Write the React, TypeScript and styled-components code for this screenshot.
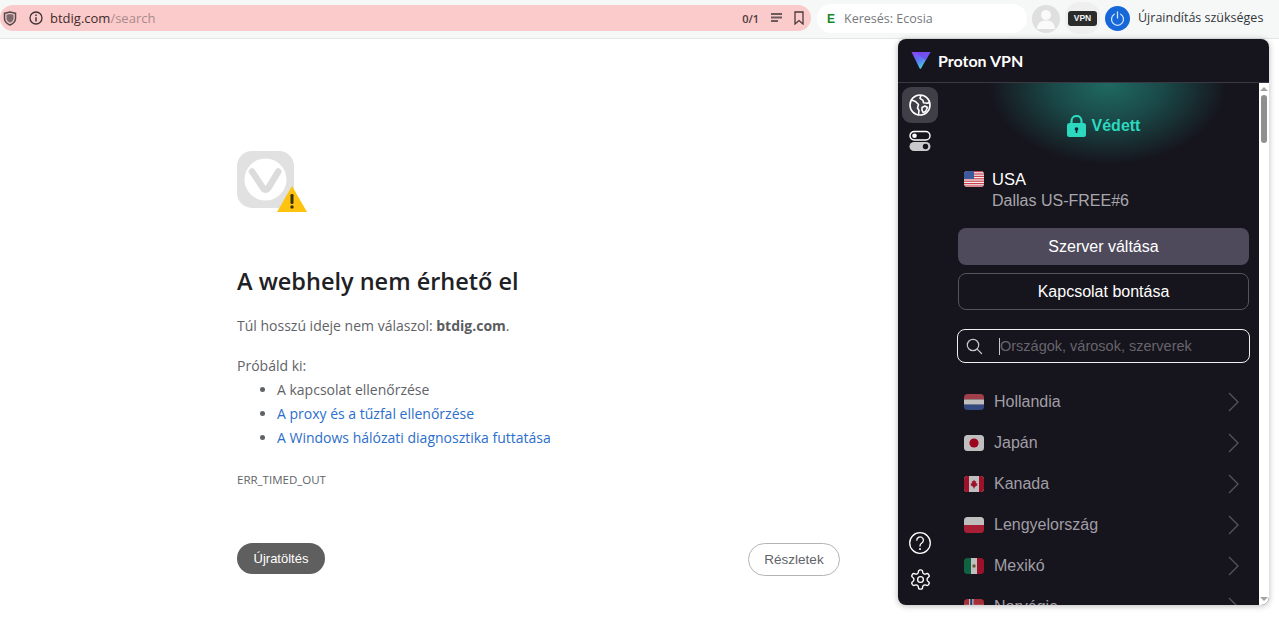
import React from "react";
import styled, { createGlobalStyle } from "styled-components";

const Global = createGlobalStyle`
  html, body { margin: 0; padding: 0; background: #fff; }
  * { box-sizing: border-box; }
`;

const Page = styled.div`
  position: relative;
  width: 1279px;
  height: 622px;
  overflow: hidden;
  background: #fff;
  font-family: "Open Sans", "Noto Sans", sans-serif;
`;

const Toolbar = styled.header`
  height: 39px;
  background: #f6f7f7;
  border-bottom: 1px solid #e6e6e6;
  display: flex;
  align-items: flex-start;
  padding-top: 5px;
`;

const AddressBar = styled.div`
  width: 811px;
  height: 26px;
  background: #fbcaca;
  border-radius: 13px;
  display: flex;
  align-items: center;
  padding: 0 7px 0 3px;
  font-size: 13px;
  color: #4a2c2e;
`;

const AddressIcon = styled.span<{ $mr: number }>`
  display: flex;
  margin-right: ${(p) => p.$mr}px;
`;

const Url = styled.span`
  flex: 1;
  color: #3f2a2c;
  font-size: 13px;
`;

const UrlPath = styled.span`
  color: #a98a8c;
`;

const Counter = styled.span`
  font-size: 11px;
  font-weight: 600;
  color: #4d3a3c;
  margin-right: 12px;
`;

const SearchField = styled.div`
  width: 210px;
  height: 29px;
  margin: -1px 0 0 6px;
  background: #fff;
  border-radius: 15px;
  display: flex;
  align-items: center;
  padding-left: 10px;
  font-size: 12.5px;
  color: #77797c;
  gap: 9px;
`;

const EcosiaBadge = styled.span`
  font-family: "Liberation Sans", sans-serif;
  font-weight: 700;
  font-size: 12px;
  color: #14892c;
`;

const Avatar = styled.div`
  width: 28px;
  height: 28px;
  margin: 0 0 0 5px;
  border-radius: 50%;
  background: #dfdfdf;
  display: flex;
  align-items: center;
  justify-content: center;
  overflow: hidden;
`;

const VpnSlot = styled.div`
  position: relative;
  width: 35px;
  height: 32px;
  margin: -3px 0 0 5px;
  background: #efefef;
  border-radius: 14px;
  display: flex;
  align-items: center;
  justify-content: center;
`;

const VpnBadge = styled.span`
  width: 29px;
  height: 15px;
  background: #2b2b2b;
  border-radius: 3px;
  color: #f2f2f2;
  font-family: "Liberation Sans", sans-serif;
  font-weight: 700;
  font-size: 8.5px;
  display: flex;
  align-items: center;
  justify-content: center;
`;

const PowerButton = styled.div`
  width: 25px;
  height: 25px;
  margin: 1px 0 0 5px;
  background: #1668d9;
  border-radius: 50%;
  display: flex;
  align-items: center;
  justify-content: center;
`;

const RestartLabel = styled.span`
  margin: 4px 0 0 8px;
  font-size: 12.5px;
  color: #33363a;
  white-space: nowrap;
`;

const ErrorPage = styled.main`
  width: 603px;
  margin-left: 237px;
  padding-top: 112px;
  color: #5f6368;
  font-size: 14px;
`;

const ErrorIcon = styled.svg`
  display: block;
  width: 71px;
  height: 62px;
`;

const Heading = styled.h1`
  margin: 52px 0 0;
  font-size: 23.5px;
  line-height: 32px;
  font-weight: 600;
  color: #202124;
`;

const Paragraph = styled.p`
  margin: 17px 0 0;
  line-height: 24px;
  font-size: 14px;
  strong { font-weight: 700; color: #5a5d61; }
`;

const TryLabel = styled.p`
  margin: 16px 0 0;
  line-height: 24px;
  font-size: 14px;
`;

const Suggestions = styled.ul`
  margin: 0;
  padding: 0 0 0 40px;
  list-style: disc;
`;

const Suggestion = styled.li<{ $link?: boolean }>`
  line-height: 24px;
  color: ${(p) => (p.$link ? "#2c6ecb" : "#5f6368")};
  &::marker { color: #5f6368; }
`;

const ErrorCode = styled.div`
  margin-top: 18px;
  font-size: 11.5px;
  line-height: 24px;
  color: #5f6368;
`;

const ActionRow = styled.div`
  margin-top: 51px;
  display: flex;
  justify-content: space-between;
  align-items: flex-start;
`;

const ReloadButton = styled.button`
  width: 88px;
  height: 31px;
  border: none;
  border-radius: 16px;
  background: #5f5f5f;
  color: #fff;
  font-family: "Liberation Sans", sans-serif;
  font-size: 13px;
  padding: 0;
`;

const DetailsButton = styled.button`
  width: 92px;
  height: 33px;
  border: 1px solid #b4b4b4;
  border-radius: 17px;
  background: #fff;
  color: #5f6368;
  font-family: "Liberation Sans", sans-serif;
  font-size: 13.5px;
  padding: 0;
`;

const Popup = styled.aside`
  position: absolute;
  left: 898px;
  top: 39px;
  width: 371px;
  height: 566px;
  border-radius: 8px;
  background: #16141c;
  box-shadow: 0 1px 6px rgba(0, 0, 0, 0.28);
  display: flex;
  flex-direction: column;
  overflow: hidden;
  font-family: "Liberation Sans", sans-serif;
`;

const PopupHeader = styled.div`
  height: 44px;
  flex: none;
  border-bottom: 1px solid #3a3841;
  display: flex;
  align-items: center;
  padding: 0 0 1px 13px;
  gap: 7px;
`;

const Brand = styled.span`
  font-family: Lato, "Noto Sans", sans-serif;
  font-weight: 700;
  font-size: 16px;
  color: #fff;
`;

const PopupBody = styled.div`
  flex: 1;
  min-height: 0;
  display: flex;
`;

const Sidebar = styled.nav`
  width: 45px;
  flex: none;
  padding: 4px 0 8px 4px;
  display: flex;
  flex-direction: column;
  align-items: flex-start;
`;

const NavItem = styled.div<{ $active?: boolean }>`
  width: 36px;
  height: 36px;
  border-radius: 9px;
  background: ${(p) => (p.$active ? "#403e47" : "transparent")};
  display: flex;
  align-items: center;
  justify-content: center;
`;

const SidebarSpacer = styled.div`
  flex: 1;
`;

const Main = styled.div`
  flex: 1;
  min-width: 0;
  overflow: hidden;
`;

const StatusGlow = styled.div`
  height: 85px;
  background: radial-gradient(ellipse 120px 82px at 165px 0, #1f6a62 0%, #1a4a49 45%, #16141c 100%);
  display: flex;
  align-items: center;
  justify-content: center;
  gap: 6px;
  padding: 0 0 0 5px;
  margin-bottom: 0;
  color: #2cd9bf;
  font-weight: 700;
  font-size: 16px;
`;

const Location = styled.div`
  margin: 0 0 0 21px;
  display: grid;
  grid-template-columns: 20px 1fr;
  column-gap: 8px;
  align-items: center;
`;

const Country = styled.div`
  font-size: 16.5px;
  line-height: 22px;
  color: #fff;
`;

const Server = styled.div`
  grid-column: 2;
  font-size: 16px;
  line-height: 22px;
  color: #a8a6ad;
`;

const PrimaryButton = styled.button`
  display: block;
  width: 291px;
  height: 37px;
  margin: 16px 0 0 15px;
  border: none;
  border-radius: 8px;
  background: #4e4a5b;
  color: #fff;
  font-family: inherit;
  font-size: 16px;
`;

const OutlineButton = styled.button`
  display: block;
  width: 291px;
  height: 37px;
  margin: 8px 0 0 15px;
  border: 1px solid #55535c;
  border-radius: 8px;
  background: transparent;
  color: #fff;
  font-family: inherit;
  font-size: 16px;
`;

const SearchBox = styled.div`
  width: 293px;
  height: 34px;
  margin: 19px 0 0 14px;
  border: 1.5px solid #f0f0f0;
  border-radius: 8px;
  display: flex;
  align-items: center;
  padding-left: 8px;
  gap: 16px;
  font-size: 14.5px;
  color: #66646c;
`;

const Placeholder = styled.span`
  border-left: 1px solid #c8c8c8;
  line-height: 17px;
  white-space: nowrap;
`;

const CountryList = styled.div`
  margin: 18px 0 0 15px;
  width: 291px;
`;

const CountryRow = styled.div`
  height: 41px;
  display: flex;
  align-items: center;
  padding-left: 6px;
  font-size: 16px;
  color: #a09ea6;
  gap: 10px;
`;

const CountryName = styled.span`
  flex: 1;
`;

const Chevron = styled.svg`
  margin-right: 10px;
`;

const Track = styled.div`
  position: relative;
  width: 10px;
  flex: none;
  background: #fff;
`;

const ArrowUp = styled.div`
  position: absolute;
  top: 4px;
  left: 1px;
  width: 0;
  height: 0;
  border: 4px solid transparent;
  border-top: 0;
  border-bottom: 4px solid #a3a3a3;
`;

const ArrowDown = styled.div`
  position: absolute;
  bottom: 4px;
  left: 1px;
  width: 0;
  height: 0;
  border: 4px solid transparent;
  border-bottom: 0;
  border-top: 4px solid #a3a3a3;
`;

const Thumb = styled.div`
  position: absolute;
  top: 12px;
  left: 2px;
  width: 6px;
  height: 48px;
  border-radius: 3px;
  background: #8f8f8f;
`;

type FlagKind = "us" | "nl" | "jp" | "ca" | "pl" | "mx" | "no";

const Flag = ({ kind, dim = true }: { kind: FlagKind; dim?: boolean }) => {
  const id = `clip-${kind}`;
  return (
    <svg width="20" height="16" viewBox="0 0 20 16" style={{ flex: "none", opacity: dim ? 0.78 : 1 }}>
      <clipPath id={id}>
        <rect width="20" height="16" rx="3.5" />
      </clipPath>
      <g clipPath={`url(#${id})`}>
        {kind === "us" && (
          <>
            <rect width="20" height="16" fill="#f3f0f0" />
            {[0, 2.4, 4.8, 7.2, 9.6, 12, 14.4].map((y) => (
              <rect key={y} y={y} width="20" height="1.2" fill="#c9404f" />
            ))}
            <rect width="10" height="8" fill="#3c5a9c" />
          </>
        )}
        {kind === "nl" && (
          <>
            <rect width="20" height="5.4" fill="#c94a57" />
            <rect y="5.4" width="20" height="5.3" fill="#efefef" />
            <rect y="10.7" width="20" height="5.3" fill="#3a5a9e" />
          </>
        )}
        {kind === "jp" && (
          <>
            <rect width="20" height="16" fill="#efefef" />
            <circle cx="10" cy="8" r="4.6" fill="#c4001f" />
          </>
        )}
        {kind === "ca" && (
          <>
            <rect width="20" height="16" fill="#efefef" />
            <rect width="5" height="16" fill="#c4122f" />
            <rect x="15" width="5" height="16" fill="#c4122f" />
            <path d="M10 3.5l1 2 1.2-.5-.4 2.6 1.6-.6-.5 1.5.8.5-3 2-.3 1.5h-.8l-.3-1.5-3-2 .8-.5-.5-1.5 1.6.6-.4-2.6 1.2.5z" fill="#c4122f" />
          </>
        )}
        {kind === "pl" && (
          <>
            <rect width="20" height="8" fill="#efefef" />
            <rect y="8" width="20" height="8" fill="#d0233f" />
          </>
        )}
        {kind === "mx" && (
          <>
            <rect width="7" height="16" fill="#0f7a4d" />
            <rect x="7" width="6" height="16" fill="#efefef" />
            <rect x="13" width="7" height="16" fill="#c4122f" />
            <circle cx="10" cy="8" r="1.7" fill="#7f6a3e" />
          </>
        )}
        {kind === "no" && (
          <>
            <rect width="20" height="16" fill="#d0343f" />
            <rect x="5" width="4.5" height="16" fill="#efefef" />
            <rect y="5.8" width="20" height="4.4" fill="#efefef" />
            <rect x="6.2" width="2.1" height="16" fill="#2a4a8e" />
            <rect y="7" width="20" height="2" fill="#2a4a8e" />
          </>
        )}
      </g>
    </svg>
  );
};

const countries: { kind: FlagKind; name: string }[] = [
  { kind: "nl", name: "Hollandia" },
  { kind: "jp", name: "Japán" },
  { kind: "ca", name: "Kanada" },
  { kind: "pl", name: "Lengyelország" },
  { kind: "mx", name: "Mexikó" },
  { kind: "no", name: "Norvégia" },
];

export default function App() {
  return (
    <Page>
      <Global />
      <Toolbar>
        <AddressBar>
          <AddressIcon $mr={12}>
            <svg width="14" height="15" viewBox="0 0 14 15">
              <path d="M1.5 2.2C4 1.7 5.5 1.3 7 1c1.5.3 3 .7 5.5 1.2v5.2c0 3.2-2.5 5.2-5.5 6.6-3-1.4-5.5-3.4-5.5-6.6z" fill="none" stroke="#55494b" strokeWidth="1.5" />
              <path d="M3.5 3.8L7 3l3.5.8v3.6c0 2-1.5 3.4-3.5 4.4-2-1-3.500-2.400-3.500-4.400z" fill="#7a6a6c" />
            </svg>
          </AddressIcon>
          <AddressIcon $mr={7}>
            <svg width="14" height="14" viewBox="0 0 14 14" fill="none" stroke="#3f3234" strokeWidth="1.3">
              <circle cx="7" cy="7" r="6" />
              <path d="M7 6.200V10.500" strokeWidth="1.5" />
              <path d="M7 3.500V5" strokeWidth="1.5" />
            </svg>
          </AddressIcon>
          <Url>
            btdig.com<UrlPath>/search</UrlPath>
          </Url>
          <Counter>0/1</Counter>
          <AddressIcon $mr={12}>
            <svg width="11" height="10" viewBox="0 0 11 10" fill="#6d5a5c">
              <rect width="11" height="2" />
              <rect y="3.500" width="11" height="2" />
              <rect y="7" width="7" height="2" />
            </svg>
          </AddressIcon>
          <AddressIcon $mr={0}>
            <svg width="10" height="14" viewBox="0 0 10 14" fill="none" stroke="#4a3a3c" strokeWidth="1.3">
              <path d="M1 1h8v12L5 9.500 1 13z" />
            </svg>
          </AddressIcon>
        </AddressBar>
        <SearchField>
          <EcosiaBadge>E</EcosiaBadge>
          Keresés: Ecosia
        </SearchField>
        <Avatar>
          <svg width="28" height="28" viewBox="0 0 28 28" fill="#fafafa">
            <circle cx="14" cy="10" r="5" />
            <path d="M5 24c0-6 4-8.500 9-8.500s9 2.500 9 8.500z" />
          </svg>
        </Avatar>
        <VpnSlot>
          <VpnBadge>VPN</VpnBadge>
        </VpnSlot>
        <PowerButton>
          <svg width="15" height="15" viewBox="0 0 15 15" fill="none" stroke="#cfe3ff" strokeWidth="1.300" strokeLinecap="round">
            <path d="M4.300 3.200a6 6 0 1 0 6.400 0" />
            <path d="M7.500 1v6" />
          </svg>
        </PowerButton>
        <RestartLabel>Újraindítás szükséges</RestartLabel>
      </Toolbar>

      <ErrorPage>
        <ErrorIcon viewBox="0 0 71 62">
          <rect width="57" height="57" rx="15" fill="#e1e1e1" />
          <circle cx="28.500" cy="28.500" r="21" fill="#fff" />
          <path d="M15 20.500L26 37c1.500 2.300 4 2.300 5.300 0l10-16.500" fill="none" stroke="#dcdcdc" strokeWidth="6.500" strokeLinecap="round" strokeLinejoin="round" />
          <path d="M55 35L70 61H40z" fill="#fdc30f" />
          <rect x="53.500" y="43" width="3" height="10" rx="1.200" fill="#3a3000" />
          <circle cx="55" cy="56" r="1.700" fill="#3a3000" />
        </ErrorIcon>
        <Heading>A webhely nem érhető el</Heading>
        <Paragraph>
          Túl hosszú ideje nem válaszol: <strong>btdig.com</strong>.
        </Paragraph>
        <TryLabel>Próbáld ki:</TryLabel>
        <Suggestions>
          <Suggestion>A kapcsolat ellenőrzése</Suggestion>
          <Suggestion $link>A proxy és a tűzfal ellenőrzése</Suggestion>
          <Suggestion $link>A Windows hálózati diagnosztika futtatása</Suggestion>
        </Suggestions>
        <ErrorCode>ERR_TIMED_OUT</ErrorCode>
        <ActionRow>
          <ReloadButton>Újratöltés</ReloadButton>
          <DetailsButton>Részletek</DetailsButton>
        </ActionRow>
      </ErrorPage>

      <Popup>
        <PopupHeader>
          <svg width="20" height="18" viewBox="0 0 20 18">
            <defs>
              <linearGradient id="protonLogo" x1="0" y1="0" x2="0.600" y2="1">
                <stop offset="0" stopColor="#8a3ff5" />
                <stop offset="0.550" stopColor="#5a7bf5" />
                <stop offset="1" stopColor="#3fe0d0" />
              </linearGradient>
            </defs>
            <path d="M0.500 1H19.500L10 17.500c-.4.600-1 .500-1.300 0z" fill="url(#protonLogo)" />
            <path d="M4 1h15.500l-5 8z" fill="#7b3ff0" opacity="0.650" />
          </svg>
          <Brand>Proton VPN</Brand>
        </PopupHeader>
        <PopupBody>
          <Sidebar>
            <NavItem $active>
              <svg width="24" height="24" viewBox="0 0 24 24" fill="none" stroke="#fff" strokeWidth="1.600" strokeLinejoin="round">
                <circle cx="12" cy="12" r="10" />
                <path d="M3.500 7l4 1.500 3 3-1 3.500 1.500 2.500-.5 4" />
                <path d="M13 2.300l-1 3 3 2 .5 2.500 4 .5 2.300-1" />
                <path d="M14 14.500l3-1.500 2.500 1.500-2 4-2.500 1-1-2.500z" />
              </svg>
            </NavItem>
            <NavItem>
              <svg width="22" height="22" viewBox="0 0 22 22">
                <rect x="1" y="1.500" width="20" height="8.500" rx="4.250" fill="none" stroke="#fff" strokeWidth="1.400" />
                <circle cx="5.500" cy="5.750" r="2.300" fill="#fff" />
                <rect x="0.500" y="12" width="21" height="9" rx="4.500" fill="#c9c9cb" />
                <circle cx="16.500" cy="16.500" r="2.700" fill="#16141c" />
              </svg>
            </NavItem>
            <SidebarSpacer />
            <NavItem>
              <svg width="24" height="24" viewBox="0 0 24 24" fill="none" stroke="#fff" strokeWidth="1.300" strokeLinecap="round">
                <circle cx="12" cy="12" r="10.300" />
                <path d="M8.800 9.200a3.300 3.300 0 1 1 5 2.800c-1.200.8-1.800 1.300-1.800 3" />
                <path d="M12 17.800v.4" strokeWidth="1.800" />
              </svg>
            </NavItem>
            <NavItem>
              <svg width="23" height="23" viewBox="0 0 24 24" fill="none" stroke="#fff" strokeWidth="1.400" strokeLinecap="round" strokeLinejoin="round">
                <path d="M12.220 2h-.44a2 2 0 0 0-2 2v.18a2 2 0 0 1-1 1.730l-.43.250a2 2 0 0 1-2 0l-.15-.08a2 2 0 0 0-2.730.73l-.22.380a2 2 0 0 0 .73 2.730l.15.100a2 2 0 0 1 1 1.720v.510a2 2 0 0 1-1 1.740l-.15.090a2 2 0 0 0-.73 2.730l.22.380a2 2 0 0 0 2.730.730l.15-.080a2 2 0 0 1 2 0l.43.250a2 2 0 0 1 1 1.730V20a2 2 0 0 0 2 2h.44a2 2 0 0 0 2-2v-.18a2 2 0 0 1 1-1.730l.43-.250a2 2 0 0 1 2 0l.15.080a2 2 0 0 0 2.730-.730l.22-.390a2 2 0 0 0-.73-2.730l-.15-.080a2 2 0 0 1-1-1.740v-.500a2 2 0 0 1 1-1.740l.15-.090a2 2 0 0 0 .73-2.730l-.22-.380a2 2 0 0 0-2.730-.730l-.15.080a2 2 0 0 1-2 0l-.43-.250a2 2 0 0 1-1-1.730V4a2 2 0 0 0-2-2z" />
                <circle cx="12" cy="12" r="3" />
              </svg>
            </NavItem>
          </Sidebar>
          <Main>
            <StatusGlow>
              <svg width="19" height="22" viewBox="0 0 19 22">
                <path d="M4.500 9V6a5 5 0 0 1 10 0v3" fill="none" stroke="#2cd9bf" strokeWidth="2.200" />
                <rect y="8" width="19" height="14" rx="2.500" fill="#2cd9bf" />
                <circle cx="9.500" cy="14" r="1.800" fill="#123" />
                <rect x="8.700" y="14" width="1.600" height="4" fill="#123" />
              </svg>
              Védett
            </StatusGlow>
            <Location>
              <Flag kind="us" dim={false} />
              <Country>USA</Country>
              <Server>Dallas US-FREE#6</Server>
            </Location>
            <PrimaryButton>Szerver váltása</PrimaryButton>
            <OutlineButton>Kapcsolat bontása</OutlineButton>
            <SearchBox>
              <svg width="17" height="17" viewBox="0 0 17 17" fill="none" stroke="#c9c9cb" strokeWidth="1.200" strokeLinecap="round">
                <circle cx="7" cy="7" r="5.700" />
                <path d="M11.200 11.200L15.500 15.500" />
              </svg>
              <Placeholder>Országok, városok, szerverek</Placeholder>
            </SearchBox>
            <CountryList>
              {countries.map((c) => (
                <CountryRow key={c.kind}>
                  <Flag kind={c.kind} />
                  <CountryName>{c.name}</CountryName>
                  <Chevron width="11" height="20" viewBox="0 0 11 20" fill="none" stroke="#56545c" strokeWidth="1.300">
                    <path d="M1 1l9 9-9 9" />
                  </Chevron>
                </CountryRow>
              ))}
            </CountryList>
          </Main>
          <Track>
            <ArrowUp />
            <Thumb />
            <ArrowDown />
          </Track>
        </PopupBody>
      </Popup>
    </Page>
  );
}
